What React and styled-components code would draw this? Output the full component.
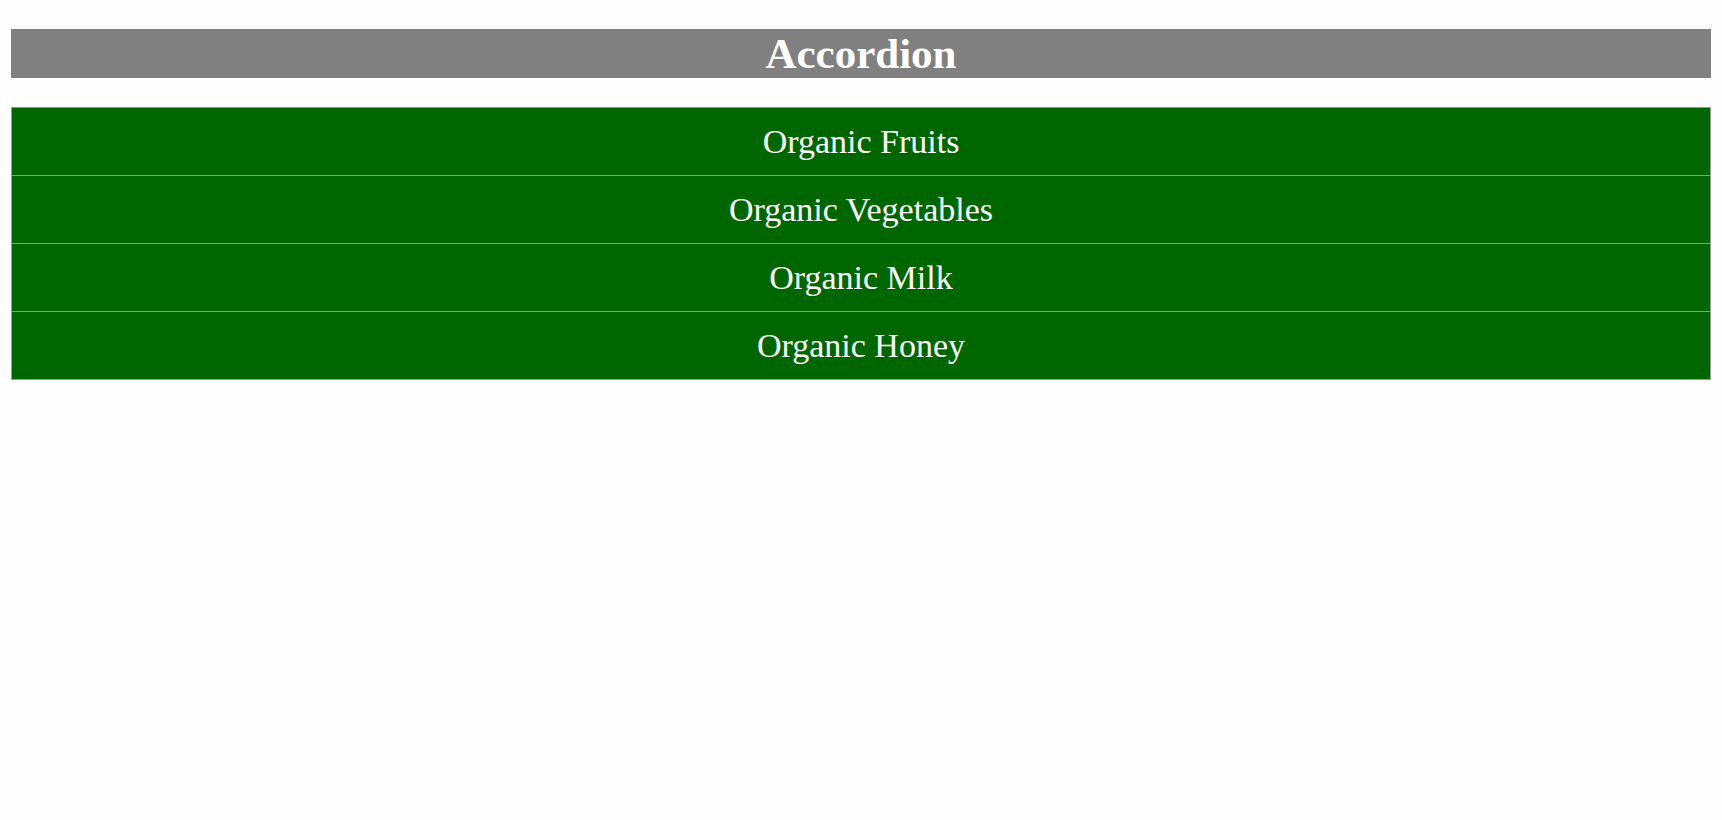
import React from 'react';
import styled, { createGlobalStyle } from 'styled-components';

const GlobalStyle = createGlobalStyle`
  body {
    margin: 0;
    background: #fefefe;
    font-family: "Liberation Serif", "Times New Roman", serif;
  }
`;

const Page = styled.div`
  padding: 29px 11px;
`;

const Header = styled.h1`
  margin: 0 0 29px;
  background: #808080;
  color: #fff;
  text-align: center;
  font-size: 43px;
  font-weight: 700;
  line-height: 49px;
`;

const List = styled.div`
  border: 1px solid #9a9a9a;
  border-top: 0;
  background: #006600;
`;

const Item = styled.div`
  border-top: 1px solid #8a9a8a;
  color: #fff;
  text-align: center;
  font-size: 34px;
  line-height: 67px;
`;

const items = ['Organic Fruits', 'Organic Vegetables', 'Organic Milk', 'Organic Honey'];

const App = () => {
  return (
    <>
      <GlobalStyle />
      <Page>
        <Header>Accordion</Header>
        <List>
          {items.map((item) => (
            <Item key={item}>{item}</Item>
          ))}
        </List>
      </Page>
    </>
  );
};

export default App;
